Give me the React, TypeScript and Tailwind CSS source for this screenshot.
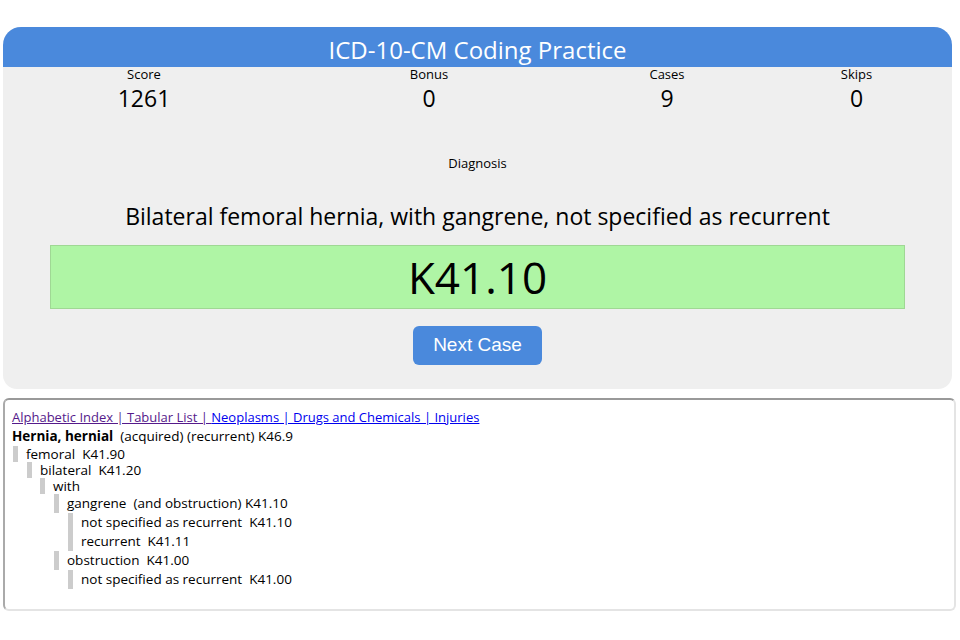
import React from 'react';

const stats = [
  { label: 'Score', value: '1261' },
  { label: 'Bonus', value: '0' },
  { label: 'Cases', value: '9' },
  { label: 'Skips', value: '0' },
];

type Entry = { depth: number; text: string; tall?: boolean };

const tree: Entry[] = [
  { depth: 1, text: 'femoral  K41.90' },
  { depth: 2, text: 'bilateral  K41.20' },
  { depth: 3, text: 'with' },
  { depth: 4, text: 'gangrene  (and obstruction) K41.10', tall: true },
  { depth: 5, text: 'not specified as recurrent  K41.10', tall: true },
  { depth: 5, text: 'recurrent  K41.11', tall: true },
  { depth: 4, text: 'obstruction  K41.00', tall: true },
  { depth: 5, text: 'not specified as recurrent  K41.00', tall: true },
];

const indent: Record<number, string> = {
  1: 'ml-[1px]',
  2: 'ml-[15px]',
  3: 'ml-[28px]',
  4: 'ml-[42px]',
  5: 'ml-[56px]',
};

export default function App() {
  return (
    <div className="w-[960px] h-[640px] bg-white pt-[27px] font-['Open_Sans',sans-serif] text-black">
      <div className="ml-[3px] w-[949px] h-[362px] bg-[#efefef] rounded-t-[18px] rounded-b-[14px] flex flex-col">
        <div className="h-[40px] bg-[#4a89dc] rounded-t-[18px] flex items-center justify-center pt-[6px]">
          <h1 className="text-[24px] leading-none text-white">ICD-10-CM Coding Practice</h1>
        </div>

        <div className="grid grid-cols-[282px_288px_188px_1fr]">
          {stats.map((s) => (
            <div key={s.label} className="flex flex-col items-center">
              <span className="text-[13px] leading-[15px]">{s.label}</span>
              <span className="text-[23px] leading-[32px]">{s.value}</span>
            </div>
          ))}
        </div>

        <div className="mt-[41px] text-center text-[13px] leading-[16px]">Diagnosis</div>
        <div className="mt-[30px] text-center text-[23px] leading-[30px]">
          Bilateral femoral hernia, with gangrene, not specified as recurrent
        </div>

        <div className="mt-[14px] mx-[47px] h-[64px] bg-[#aff5a5] border border-[#9fd894] flex items-center justify-center">
          <span className="text-[44px] leading-none">K41.10</span>
        </div>

        <div className="flex justify-center mt-[17px]">
          <button className="w-[129px] h-[39px] bg-[#4a89dc] rounded-[6px] text-white text-[19px] font-['Liberation_Sans',sans-serif]">
            Next Case
          </button>
        </div>
      </div>

      <div className="ml-[3px] mt-[9px] w-[953px] h-[213px] border-2 border-t-[#999] border-l-[#aaa] border-r-[#e4e4e4] border-b-[#e4e4e4] rounded-[6px] px-[7px] pt-[8px] text-[13.5px]">
        <div className="leading-[19px] text-[13px]">
          <a href="#" className="underline text-[#551a8b]">Alphabetic Index | Tabular List | </a>
          <a href="#" className="underline text-[#0000ee]">Neoplasms | Drugs and Chemicals | Injuries</a>
        </div>
        <div className="leading-[19px] whitespace-pre">
          <b>Hernia, hernial</b>  (acquired) (recurrent) K46.9
        </div>
        {tree.map((e, i) => (
          <div
            key={i}
            className={`${indent[e.depth]} ${e.tall ? 'h-[19px] leading-[19px]' : 'h-[16px] leading-[16px]'} border-l-[5px] border-[#ccc] pl-[8px] whitespace-pre`}
          >
            {e.text}
          </div>
        ))}
      </div>
    </div>
  );
}
